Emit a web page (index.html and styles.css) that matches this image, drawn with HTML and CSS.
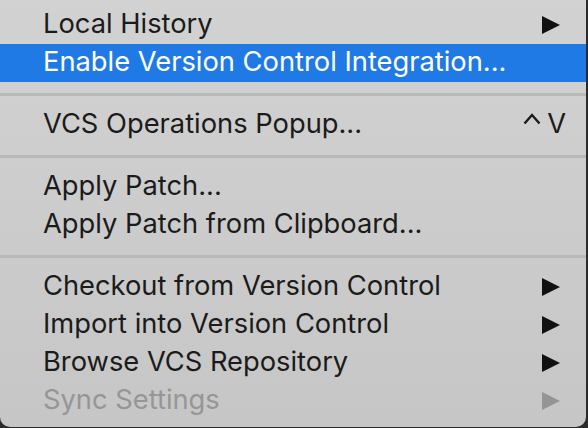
FILE: index.html
```html
<!DOCTYPE html>
<html>
<head>
<meta charset="utf-8">
<link rel="stylesheet" href="styles.css">
</head>
<body>
<div class="menu">
  <div class="item"><span class="label">Local History</span><span class="arrow"></span></div>
  <div class="item selected"><span class="label">Enable Version Control Integration...</span></div>
  <div class="sep"></div>
  <div class="item"><span class="label">VCS Operations Popup...</span><span class="shortcut"><svg class="caret" width="18" height="12" viewBox="0 0 18 12"><polyline points="1.5,10.5 9,2 16.5,10.5" fill="none" stroke="#1b1b1b" stroke-width="2.4"/></svg><span>V</span></span></div>
  <div class="sep"></div>
  <div class="item"><span class="label">Apply Patch...</span></div>
  <div class="item"><span class="label">Apply Patch from Clipboard...</span></div>
  <div class="sep"></div>
  <div class="item"><span class="label">Checkout from Version Control</span><span class="arrow"></span></div>
  <div class="item"><span class="label">Import into Version Control</span><span class="arrow"></span></div>
  <div class="item"><span class="label">Browse VCS Repository</span><span class="arrow"></span></div>
  <div class="item disabled"><span class="label">Sync Settings</span><span class="arrow"></span></div>
</div>
</body>
</html>
```
FILE: styles.css
```css
html, body {
  margin: 0;
  padding: 0;
  width: 588px;
  height: 428px;
  overflow: hidden;
  background: #2b2b2b;
}
.menu {
  width: 586px;
  height: 427px;
  box-sizing: border-box;
  padding-top: 6px;
  background: linear-gradient(180deg, #d2d2d2 0%, #cbcbcb 60%, #c6c6c6 100%);
  border-radius: 0 0 10px 10px;
  display: flex;
  flex-direction: column;
  font-family: Inter, "Noto Sans", sans-serif;
  font-size: 27.3px;
  color: #1b1b1b;
}
.item {
  height: 38px;
  flex: none;
  display: flex;
  align-items: center;
  padding-left: 43px;
  padding-right: 26px;
}
.label {
  flex: 1;
  white-space: nowrap;
  position: relative;
  top: -2px;
}
.selected {
  background: #1f7ae6;
  color: #ffffff;
}
.disabled {
  color: #969696;
}
.sep {
  height: 24px;
  flex: none;
  display: flex;
  align-items: center;
}
.sep::before {
  content: "";
  display: block;
  width: 100%;
  height: 3px;
  background: #b9b9b9;
}
.arrow {
  width: 0;
  height: 0;
  border-top: 9.5px solid transparent;
  border-bottom: 9.5px solid transparent;
  border-left: 18px solid #111111;
}
.disabled .arrow {
  border-left-color: #959595;
}
.shortcut {
  display: flex;
  align-items: center;
  gap: 6px;
  margin-right: -6px;
  position: relative;
  top: -2px;
}
.caret {
  align-self: flex-start;
  margin-top: 6px;
}
```
